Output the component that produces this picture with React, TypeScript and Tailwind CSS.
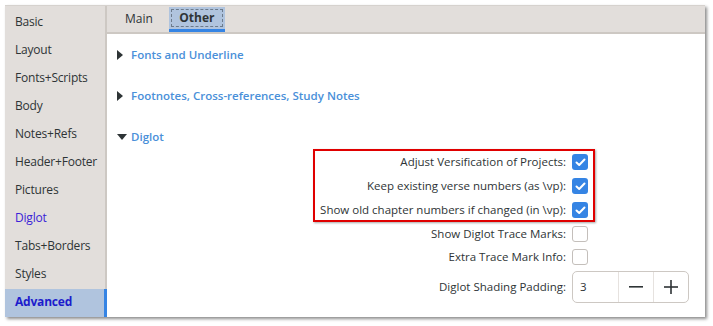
import React from 'react';

const sideItems = ['Basic', 'Layout', 'Fonts+Scripts', 'Body', 'Notes+Refs', 'Header+Footer', 'Pictures', 'Diglot', 'Tabs+Borders', 'Styles', 'Advanced'];

function Check({ on }: { on: boolean }) {
  if (!on) {
    return <div className="w-[16px] h-[16px] rounded-[3px] border border-[#c4bfbb] bg-white" />;
  }
  return (
    <div className="w-[16px] h-[16px] rounded-[3px] bg-[#3584e4] flex items-center justify-center">
      <svg width="11" height="9" viewBox="0 0 11 9">
        <path d="M1.5 4.5 L4.2 7 L9.5 1.5" fill="none" stroke="white" strokeWidth="2" strokeLinecap="round" strokeLinejoin="round" />
      </svg>
    </div>
  );
}

function Expander({ label, open }: { label: string; open?: boolean }) {
  return (
    <div className="flex items-center h-[20px] text-[#4a90d9] font-semibold">
      <span className="w-[14px] flex items-center justify-start">
        {open ? (
          <svg width="10" height="6" viewBox="0 0 10 6"><path d="M0 0 L10 0 L5 6 Z" fill="#2e3436" /></svg>
        ) : (
          <svg width="6" height="10" viewBox="0 0 6 10"><path d="M0 0 L6 5 L0 10 Z" fill="#2e3436" /></svg>
        )}
      </span>
      {label}
    </div>
  );
}

export default function App() {
  const rows: [string, boolean, string][] = [
    ['Adjust Versification of Projects:', true, 'h-[24px]'],
    ['Keep existing verse numbers (as \\vp):', true, 'h-[24px]'],
    ['Show old chapter numbers if changed (in \\vp):', true, 'h-[24px]'],
    ['Show Diglot Trace Marks:', false, 'h-[23px]'],
    ['Extra Trace Mark Info:', false, 'h-[23px]'],
  ];

  return (
    <div className="w-[713px] h-[326px] bg-white pt-[5px] pl-[5px] text-[11.5px] text-[#2e3436]" style={{ fontFamily: '"Open Sans", "Noto Sans", sans-serif' }}>
      <div className="relative w-[700px] h-[312px] flex bg-white border-t border-[#d6d2ce] shadow-[2px_2px_3px_rgba(0,0,0,0.45)]">
        {/* sidebar */}
        <div className="w-[102px] bg-[#e2dedb] border-r-2 border-[#cdc8c3] pt-[3px] flex flex-col text-[12px]">
          {sideItems.map((s) => {
            const active = s === 'Advanced';
            const link = s === 'Diglot';
            return (
              <div
                key={s}
                className={`h-[28px] pl-[10px] pb-[2px] flex items-center tracking-[-0.2px] ${active ? 'bg-[#b0c4de] text-[#1c1ccc] font-bold border-r-[3px] border-[#3584e4] -mr-[2px]' : link ? 'text-[#3a22d8]' : ''}`}
              >
                {s}
              </div>
            );
          })}
        </div>

        {/* main */}
        <div className="flex-1 flex flex-col">
          <div className="h-[28px] bg-[#e2dedb] border-b-2 border-[#cdc8c3] flex items-end pl-[6px] gap-[4px] text-[12px]">
            <div className="h-[25px] px-[12px] flex items-center pb-[2px]">Main</div>
            <div className="h-[25px] w-[56px] bg-[#b0c4de] border-b-[3px] border-[#3584e4] flex items-center justify-center font-bold p-[2px]">
              <div className="w-full h-full border border-dashed border-[#6d7b8c] flex items-center justify-center">Other</div>
            </div>
          </div>

          <div className="flex-1 pl-[10px] pt-[11px] flex flex-col">
            <Expander label="Fonts and Underline" />
            <div className="h-[21px]" />
            <Expander label="Footnotes, Cross-references, Study Notes" />
            <div className="h-[21px]" />
            <Expander label="Diglot" open />

            <div className="grid grid-cols-[449px_auto] gap-x-[6px] mt-[3px] items-center">
              {rows.map(([label, on, h]) => (
                <React.Fragment key={label}>
                  <div className={`${h} flex items-center justify-end`}>{label}</div>
                  <Check on={on} />
                </React.Fragment>
              ))}
              <div className="h-[37px] flex items-center justify-end">Diglot Shading Padding:</div>
              <div className="w-[117px] h-[32px] border border-[#cdc8c3] rounded-[5px] flex bg-white">
                <div className="w-[46px] pl-[7px] flex items-center border-r border-[#e6e2df]">3</div>
                <div className="w-[35px] flex items-center justify-center border-r border-[#e6e2df]">
                  <svg width="14" height="2" viewBox="0 0 14 2"><rect width="14" height="1.6" fill="#2e3436" /></svg>
                </div>
                <div className="flex-1 flex items-center justify-center">
                  <svg width="14" height="14" viewBox="0 0 14 14"><rect y="6.2" width="14" height="1.6" fill="#2e3436" /><rect x="6.2" width="1.6" height="14" fill="#2e3436" /></svg>
                </div>
              </div>
            </div>
          </div>
        </div>

        {/* annotation */}
        <div className="absolute left-[308px] top-[143px] w-[282px] h-[73px] border-2 border-[#e00000] shadow-[1px_1px_2px_rgba(0,0,0,0.35)] pointer-events-none" />
      </div>
    </div>
  );
}
